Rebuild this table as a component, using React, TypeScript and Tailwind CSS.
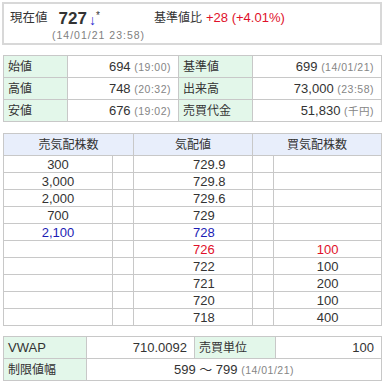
const font = { fontFamily: '"Liberation Sans", "Noto Sans CJK JP", sans-serif' }

const sell = [
  { qty: '300', price: '729.9' },
  { qty: '3,000', price: '729.8' },
  { qty: '2,000', price: '729.6' },
  { qty: '700', price: '729' },
  { qty: '2,100', price: '728', blue: true },
]

const buy = [
  { price: '726', qty: '100', red: true },
  { price: '722', qty: '100' },
  { price: '721', qty: '200' },
  { price: '720', qty: '100' },
  { price: '718', qty: '400' },
]

function Sub({ children }: { children: React.ReactNode }) {
  return <span className="text-[10.5px] tracking-[0.5px] text-[#858585]">{children}</span>
}

const label = 'border border-[#c8c8c8] bg-[#e3f7ea] pl-[4px] text-left text-[12px] h-[22px]'
const value = 'border border-[#c8c8c8] bg-white pr-[7px] text-right text-[13px] h-[22px]'
const cell = 'border border-[#c8c8c8] h-[17px] text-[13px] leading-[15px]'

export default function App() {
  return (
    <div className="w-[384px] h-[383px] bg-white text-[#333] px-[2px] pt-[2px]" style={font}>
      {/* 現在値 */}
      <div className="h-[43px] w-[380px] border-2 border-[#d8d8d8] pl-[6px] pt-[4px]">
        <div className="flex items-center h-[20px]">
          <div className="flex items-center w-[144px]">
            <span className="text-[12.5px]">現在値</span>
            <span className="ml-[11px] text-[17px] font-bold text-[#333] leading-none">727</span>
            <span className="ml-[2px] text-[14px] text-[#2b2bd0] leading-none mt-[3px]">↓</span>
            <span className="text-[10px] leading-none -mt-[4px]">*</span>
          </div>
          <span className="text-[12px]">基準値比</span>
          <span className="ml-[4px] text-[13px] text-[#e0102a]">+28 (+4.01%)</span>
        </div>
        <div className="pl-[42px] text-[10.5px] tracking-[1px] text-[#808080] leading-[13px] mt-[1px]">
          (14/01/21 23:58)
        </div>
      </div>

      {/* 四本値 */}
      <table className="mt-[10px] ml-px w-[378px] table-fixed border-collapse">
        <colgroup>
          <col className="w-[64px]" />
          <col className="w-[111px]" />
          <col className="w-[74px]" />
          <col className="w-[129px]" />
        </colgroup>
        <tbody>
          <tr>
            <td className={label}>始値</td>
            <td className={value}>694 <Sub>(19:00)</Sub></td>
            <td className={label}>基準値</td>
            <td className={value}>699 <Sub>(14/01/21)</Sub></td>
          </tr>
          <tr>
            <td className={label}>高値</td>
            <td className={value}>748 <Sub>(20:32)</Sub></td>
            <td className={label}>出来高</td>
            <td className={value}>73,000 <Sub>(23:58)</Sub></td>
          </tr>
          <tr>
            <td className={label}>安値</td>
            <td className={value}>676 <Sub>(19:02)</Sub></td>
            <td className={label}>売買代金</td>
            <td className={value}>51,830 <Sub>(千円)</Sub></td>
          </tr>
        </tbody>
      </table>

      {/* 気配 */}
      <table className="mt-[11px] ml-px w-[378px] table-fixed border-collapse">
        <colgroup>
          <col className="w-[109px]" />
          <col className="w-[21px]" />
          <col className="w-[119px]" />
          <col className="w-[21px]" />
          <col className="w-[108px]" />
        </colgroup>
        <thead>
          <tr className="bg-[#e8eefb] text-[12px]">
            <th colSpan={2} className="border border-[#c8c8c8] h-[22px] font-normal">売気配株数</th>
            <th className="border border-[#c8c8c8] h-[22px] font-normal">気配値</th>
            <th colSpan={2} className="border border-[#c8c8c8] h-[22px] font-normal">買気配株数</th>
          </tr>
        </thead>
        <tbody>
          {sell.map((r) => (
            <tr key={r.price} className={r.blue ? 'text-[#1c1cb4]' : ''}>
              <td className={`${cell} text-center`}>{r.qty}</td>
              <td className={cell}></td>
              <td className={`${cell} pl-[59px]`}>{r.price}</td>
              <td className={cell}></td>
              <td className={cell}></td>
            </tr>
          ))}
          {buy.map((r) => (
            <tr key={r.price} className={r.red ? 'text-[#e0102a]' : ''}>
              <td className={cell}></td>
              <td className={cell}></td>
              <td className={`${cell} pl-[59px]`}>{r.price}</td>
              <td className={cell}></td>
              <td className={`${cell} text-center`}>{r.qty}</td>
            </tr>
          ))}
        </tbody>
      </table>

      {/* VWAP */}
      <table className="mt-[10px] ml-px w-[378px] table-fixed border-collapse">
        <colgroup>
          <col className="w-[83px]" />
          <col className="w-[108px]" />
          <col className="w-[81px]" />
          <col className="w-[106px]" />
        </colgroup>
        <tbody>
          <tr>
            <td className={`${label} text-[13px]`}>VWAP</td>
            <td className={value}>710.0092</td>
            <td className={label}>売買単位</td>
            <td className={`${value} pr-[6px]`}>100</td>
          </tr>
          <tr>
            <td className={label}>制限値幅</td>
            <td colSpan={3} className="border border-[#c8c8c8] bg-white text-center text-[13px] h-[22px]">
              599 〜 799 <Sub>(14/01/21)</Sub>
            </td>
          </tr>
        </tbody>
      </table>
    </div>
  )
}
